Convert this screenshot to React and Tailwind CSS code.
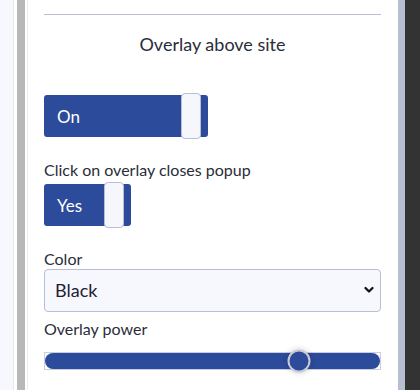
import React, { useState } from 'react';

const Toggle = ({ label, width }) => (
  <div className={`relative h-[42px] ${width} rounded-[3px] bg-[#2c4b9b] flex items-center pl-[13px]`}>
    <span className="text-white text-[17px] leading-none">{label}</span>
    <div className="absolute right-[7px] -top-[2px] -bottom-[2px] w-[20px] rounded-[4px] bg-[#f6f7fd] border border-[#b9bdd5]"></div>
  </div>
);

const App = () => {
  const [color, setColor] = useState('black');
  const power = 75.7;

  return (
    <div className="w-[420px] h-[390px] flex overflow-hidden bg-white text-[#2a2d3a]" style={{ fontFamily: 'Lato, "Noto Sans", sans-serif' }}>
      {/* left edge */}
      <div className="w-[14px] bg-[#f7f8fe] border-r border-[#e6e7ef]"></div>
      <div className="w-[3px] bg-white"></div>
      <div className="w-[8px] bg-[#b8b8b8]"></div>
      <div className="w-[3px] bg-white border-r border-[#ececf2]"></div>

      {/* panel */}
      <div className="flex-1 pl-[16px] pr-[17px]">
        <div className="mt-[14px] border-t border-[#b9bdd5]"></div>
        <h3 className="mt-[17px] text-center text-[18px] leading-[24px]">Overlay above site</h3>

        <div className="mt-[39px]">
          <Toggle label="On" width="w-[164px]" />
        </div>

        <p className="mt-[23px] text-[16px] leading-[20px]">Click on overlay closes popup</p>
        <div className="mt-[4px]">
          <Toggle label="Yes" width="w-[87px]" />
        </div>

        <p className="mt-[23px] text-[16px] leading-[20px]">Color</p>
        <div className="relative mt-0">
          <select
            value={color}
            onChange={(e) => setColor(e.target.value)}
            className="appearance-none w-full h-[43px] rounded-[4px] border border-[#b9bdd5] bg-[#f7f8fe] pl-[10px] text-[18px] text-[#1f2130] outline-none"
          >
            <option value="black">Black</option>
            <option value="white">White</option>
          </select>
          <svg className="absolute right-[7px] top-[17px] pointer-events-none" width="10" height="8" viewBox="0 0 10 8">
            <path d="M1.5 2 L5 5.5 L8.5 2" fill="none" stroke="#111" strokeWidth="2.2" strokeLinecap="round" strokeLinejoin="round" />
          </svg>
        </div>

        <p className="mt-[7px] text-[16px] leading-[20px]">Overlay power</p>
        <div className="relative mt-[13px] h-[18px] border border-[#c9cde0]">
          <div className="h-full rounded-full bg-[#2c4b9b]"></div>
          <div
            className="absolute top-1/2 w-[23px] h-[23px] -translate-x-1/2 -translate-y-1/2 rounded-full bg-[#2c4b9b] border-2 border-[#c8cad6] shadow-[0_0_6px_rgba(0,0,0,0.2)]"
            style={{ left: `${power}%` }}
          ></div>
        </div>
      </div>

      {/* right edge */}
      <div className="w-[7px] bg-[#b8bdd0]"></div>
      <div className="w-[15px] bg-[#333333]"></div>
    </div>
  );
};

export default App;
